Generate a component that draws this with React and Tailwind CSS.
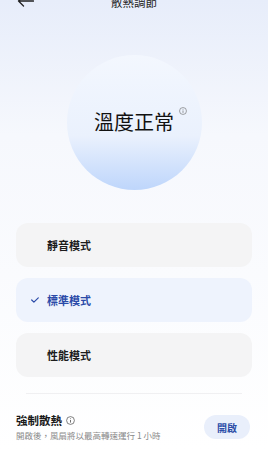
import React, { useState } from 'react';

const modes = ["靜音模式", "標準模式", "性能模式"];

const InfoIcon = ({ size = 9, color = "#555" }) => (
  <svg width={size} height={size} viewBox="0 0 12 12" fill="none">
    <circle cx="6" cy="6" r="5.2" stroke={color} strokeWidth="0.9" />
    <line x1="6" y1="5.2" x2="6" y2="8.8" stroke={color} strokeWidth="1" />
    <circle cx="6" cy="3.4" r="0.6" fill={color} />
  </svg>
);

const App = () => {
  const [mode, setMode] = useState("標準模式");

  return (
    <div
      className="w-[268px] h-[450px] overflow-hidden bg-gradient-to-b from-[#e7edfa] via-[#f6f8fd] via-30% to-white flex flex-col"
      style={{ fontFamily: '"Noto Sans CJK TC", "Noto Sans", sans-serif' }}
    >
      {/* header */}
      <div className="relative flex items-center justify-center h-[12px] -mt-[3px]">
        <svg className="absolute left-[17px] top-[-2px]" width="17" height="12" viewBox="0 0 17 12" fill="none">
          <path d="M16.5 6H1.5M6.5 1L1.5 6l5 5" stroke="#222" strokeWidth="1.3" strokeLinecap="round" strokeLinejoin="round" />
        </svg>
        <span className="text-[11.5px] leading-none text-[#222]">散熱調節</span>
      </div>

      {/* status circle */}
      <div className="flex justify-center mt-[46px]">
        <div className="w-[135px] h-[135px] rounded-full bg-gradient-to-b from-[#f3f7fe] via-[#eaf1fd] via-60% to-[#bed6fb] flex items-center justify-center">
          <div className="relative">
            <span className="text-[20px] leading-none text-[#111]">溫度正常</span>
            <span className="absolute -right-[13px] -top-[4px]">
              <InfoIcon size={8} color="#666" />
            </span>
          </div>
        </div>
      </div>

      {/* modes */}
      <div className="flex flex-col gap-[11px] px-4 mt-[33px]">
        {modes.map((m) => {
          const active = m === mode;
          return (
            <button
              key={m}
              onClick={() => setMode(m)}
              className={`h-[44px] rounded-[12px] flex items-center pl-[15px] text-left ${active ? "bg-[#eef3fd]" : "bg-[#f4f4f5]"}`}
            >
              <span className="w-[16px] flex items-center">
                {active && (
                  <svg width="8" height="6" viewBox="0 0 8 6" fill="none">
                    <path d="M0.7 3l2.2 2.2L7.3 0.8" stroke="#2a4aa8" strokeWidth="1.2" strokeLinecap="round" strokeLinejoin="round" />
                  </svg>
                )}
              </span>
              <span className={`text-[11px] font-bold leading-none ${active ? "text-[#2a4aa8]" : "text-[#1c1c1c]"}`}>{m}</span>
            </button>
          );
        })}
      </div>

      {/* divider */}
      <div className="mx-[26px] mt-[16px] h-px bg-[#f0f0f2]" />

      {/* force cooling */}
      <div className="flex items-center justify-between px-4 mt-[21px]">
        <div className="flex flex-col">
          <div className="flex items-center gap-[4px]">
            <span className="text-[11.5px] font-bold leading-none text-[#1a1a1a]">強制散熱</span>
            <InfoIcon size={9} color="#444" />
          </div>
          <span className="text-[8.5px] leading-none text-[#8a8a8a] mt-[4px]">開啟後，風扇將以最高轉速運行 1 小時</span>
        </div>
        <button className="w-[46px] h-[24px] mr-[2px] rounded-full bg-[#e9effb] text-[10px] font-bold text-[#2d4ea8]">開啟</button>
      </div>
    </div>
  );
};

export default App;
